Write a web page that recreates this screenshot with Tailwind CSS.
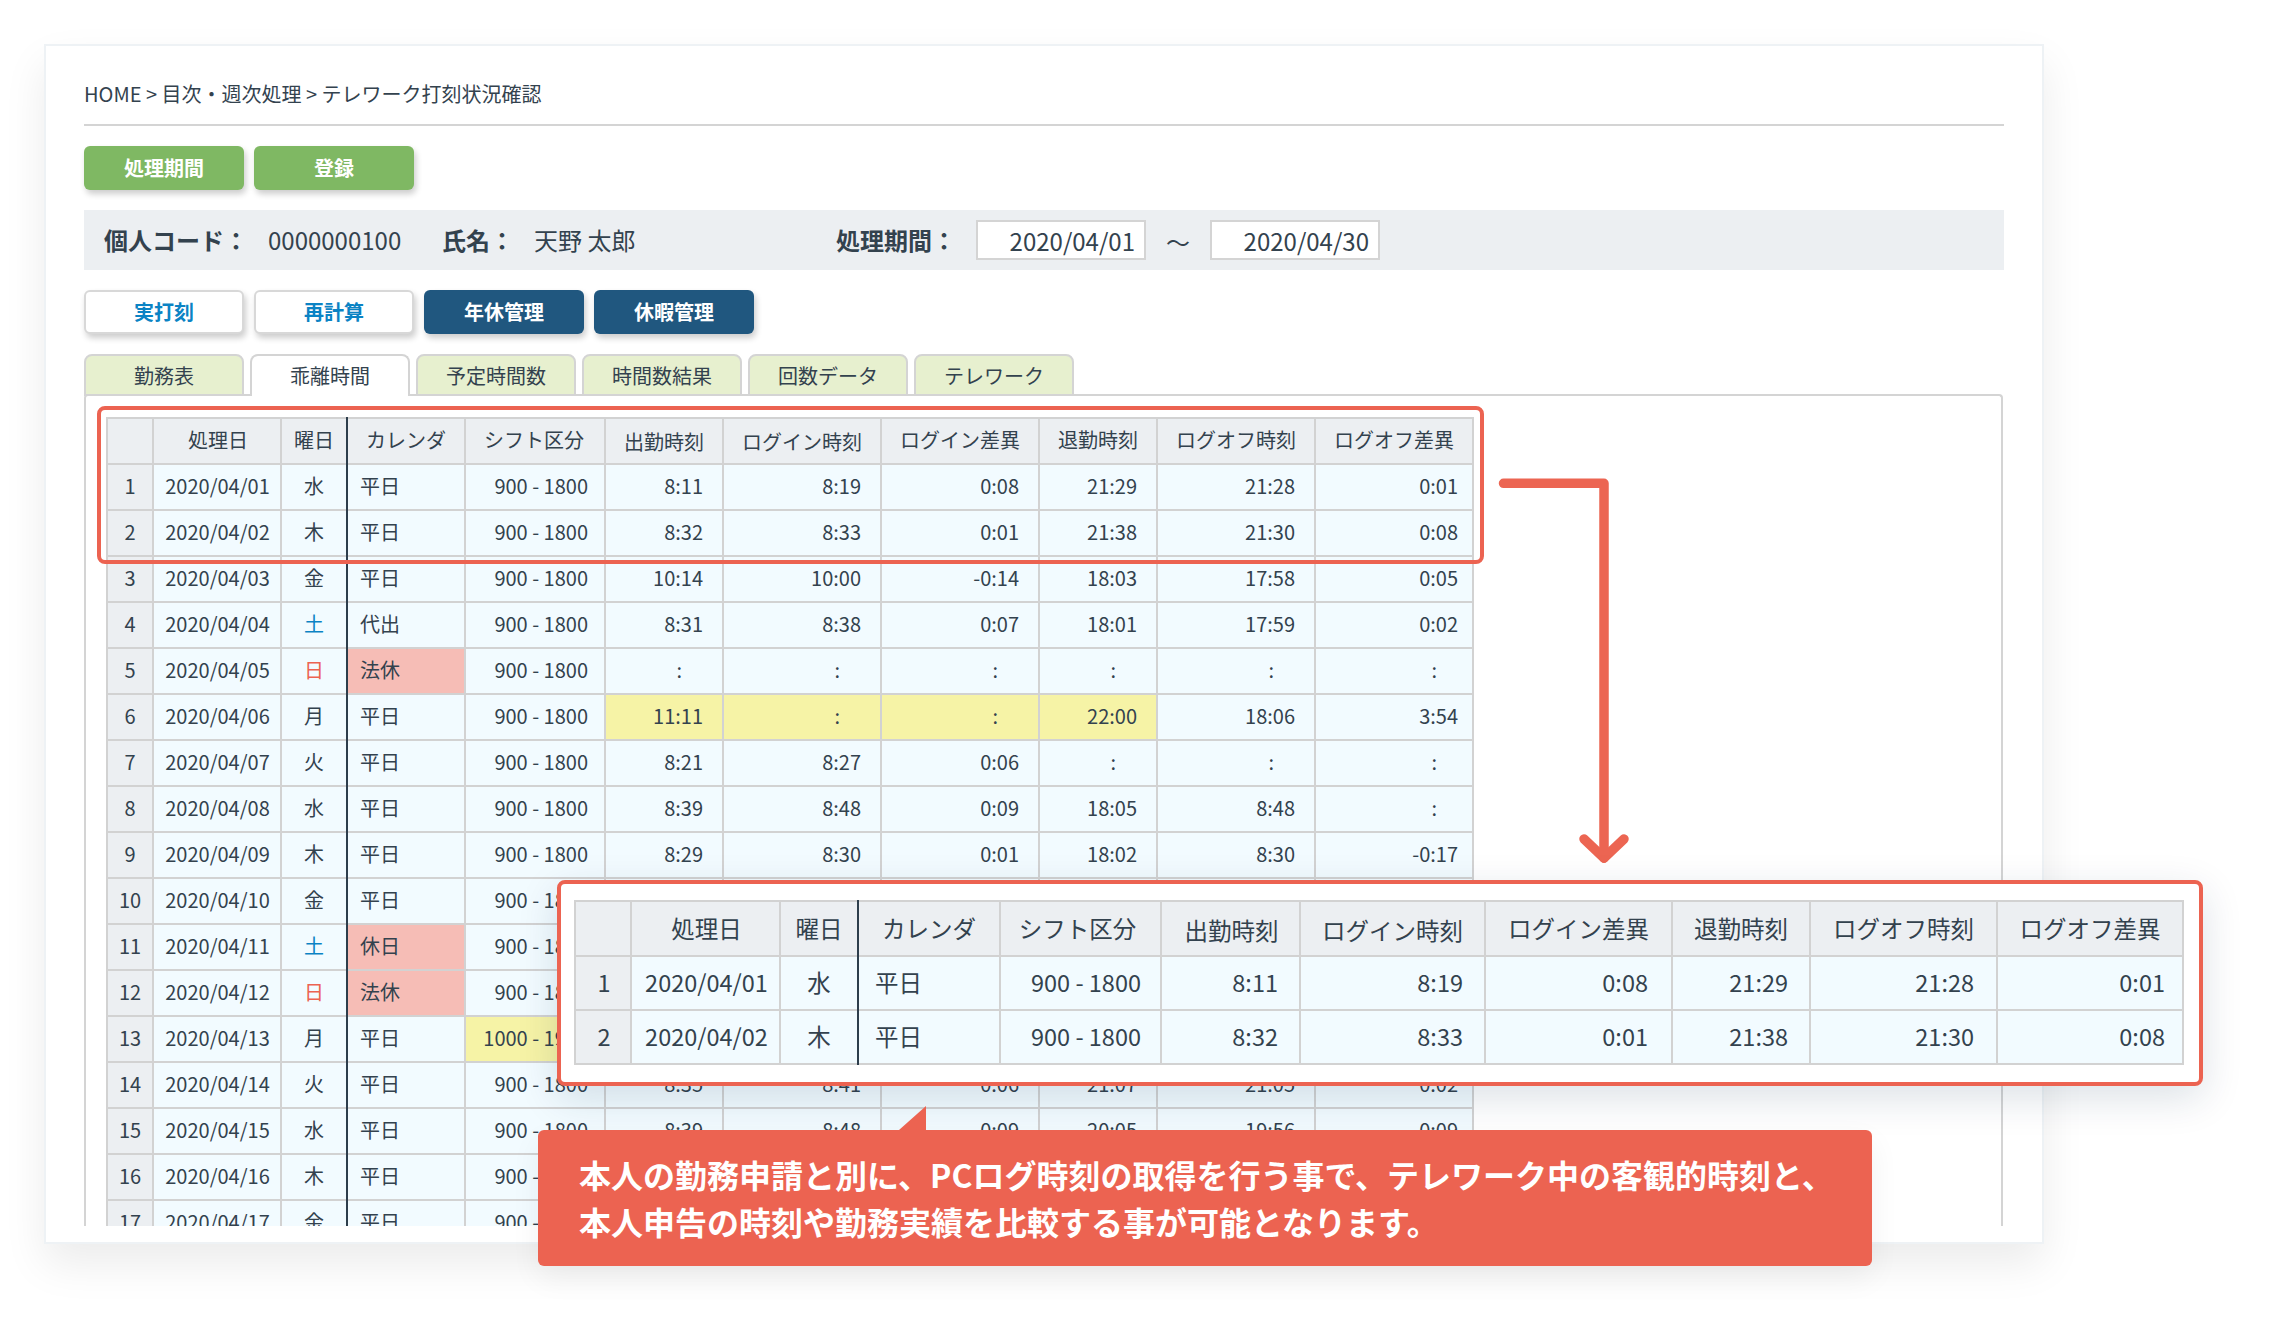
<!DOCTYPE html>
<html lang="ja">
<head>
  <meta charset="UTF-8">
  <title>テレワーク打刻状況確認</title>
  <script src="https://cdn.jsdelivr.net/npm/@tailwindcss/browser@4"></script>
</head>
<body class="relative w-[2280px] h-[1322px] overflow-hidden bg-white text-[#33424e] font-['Noto_Sans_CJK_JP','Noto_Sans',sans-serif]">

  <!-- screen card -->
  <div class="ml-[44px] mt-[44px] w-[2000px] h-[1200px] pl-[38px] pt-[32px] bg-white border-2 border-[#eef2f5] shadow-[0_20px_40px_rgba(0,0,0,0.08)]">
    <div class="w-[1920px]">
      <div class="h-[48px] leading-[32px] text-[20px] border-b-2 border-[#d4d4d4]">HOME &gt; 目次・週次処理 &gt; テレワーク打刻状況確認</div>

      <div class="flex gap-[10px] mt-[20px]">
        <button class="w-[160px] h-[44px] rounded-[6px] bg-[#7fb863] text-white text-[20px] font-bold shadow-[2px_4px_6px_rgba(0,0,0,0.2)]">処理期間</button>
        <button class="w-[160px] h-[44px] rounded-[6px] bg-[#7fb863] text-white text-[20px] font-bold shadow-[2px_4px_6px_rgba(0,0,0,0.2)]">登録</button>
      </div>

      <div class="flex items-center h-[60px] mt-[20px] pl-[20px] bg-[#eceff2] text-[24px]">
        <div class="w-[164px] font-bold">個人コード：</div>
        <div class="w-[174px]">0000000100</div>
        <div class="w-[92px] font-bold">氏名：</div>
        <div class="w-[302px]">天野 太郎</div>
        <div class="w-[140px] font-bold">処理期間：</div>
        <input readonly value="2020/04/01" class="w-[170px] h-[40px] pr-[9px] text-right bg-white border-2 border-[#d4d4d4]">
        <div class="w-[64px] pt-[4px] text-center">～</div>
        <input readonly value="2020/04/30" class="w-[170px] h-[40px] pr-[9px] text-right bg-white border-2 border-[#d4d4d4]">
      </div>

      <div class="flex gap-[10px] mt-[20px] text-[20px] font-bold">
        <button class="w-[160px] h-[44px] rounded-[6px] bg-white border-2 border-[#d8d8d8] text-[#0b83c4] shadow-[2px_4px_6px_rgba(0,0,0,0.2)]">実打刻</button>
        <button class="w-[160px] h-[44px] rounded-[6px] bg-white border-2 border-[#d8d8d8] text-[#0b83c4] shadow-[2px_4px_6px_rgba(0,0,0,0.2)]">再計算</button>
        <button class="w-[160px] h-[44px] rounded-[6px] bg-[#20577f] text-white shadow-[2px_4px_6px_rgba(0,0,0,0.2)]">年休管理</button>
        <button class="w-[160px] h-[44px] rounded-[6px] bg-[#20577f] text-white shadow-[2px_4px_6px_rgba(0,0,0,0.2)]">休暇管理</button>
      </div>

      <div class="relative z-10 flex gap-[6px] mt-[20px] -mb-[2px] text-[20px]">
        <div class="w-[160px] h-[42px] leading-[40px] text-center rounded-t-[8px] border-2 border-[#d4d4d4] bg-[#e7f0cf]">勤務表</div>
        <div class="w-[160px] h-[42px] leading-[40px] text-center rounded-t-[8px] border-2 border-b-0 border-[#d4d4d4] bg-white">乖離時間</div>
        <div class="w-[160px] h-[42px] leading-[40px] text-center rounded-t-[8px] border-2 border-[#d4d4d4] bg-[#e7f0cf]">予定時間数</div>
        <div class="w-[160px] h-[42px] leading-[40px] text-center rounded-t-[8px] border-2 border-[#d4d4d4] bg-[#e7f0cf]">時間数結果</div>
        <div class="w-[160px] h-[42px] leading-[40px] text-center rounded-t-[8px] border-2 border-[#d4d4d4] bg-[#e7f0cf]">回数データ</div>
        <div class="w-[160px] h-[42px] leading-[40px] text-center rounded-t-[8px] border-2 border-[#d4d4d4] bg-[#e7f0cf]">テレワーク</div>
      </div>

      <!-- scrolling table area -->
      <div class="w-[1919px] h-[832px] pl-[20px] pt-[21px] overflow-hidden border-2 border-b-0 border-[#d4d4d4] rounded-t-[4px]">
        <div class="relative w-[1368px]">
          <div class="absolute left-[240px] top-0 w-[2px] h-[900px] bg-[#2d3e4c] z-10"></div>
          <table class="w-[1368px] table-fixed border-collapse text-[20px] leading-[26px] [&_td]:border-2 [&_td]:border-[#d2d2d2] [&_td]:h-[46px] [&_td]:p-0 [&_td]:pb-[2px]">
            <colgroup>
              <col class="w-[46px]"><col class="w-[128px]"><col class="w-[66px]"><col class="w-[118px]"><col class="w-[140px]"><col class="w-[118px]"><col class="w-[158px]"><col class="w-[158px]"><col class="w-[118px]"><col class="w-[158px]"><col class="w-[158px]">
            </colgroup>
            <thead class="bg-[#eceff2] text-center">
              <tr><td></td><td><span class="relative left-[1px]">処理日</span></td><td>曜日</td><td>カレンダ</td><td><span class="relative -left-[1px]">シフト区分</span></td><td><span class="relative top-[2px]">出勤時刻</span></td><td><span class="relative top-[2px]">ログイン時刻</span></td><td>ログイン差異</td><td>退勤時刻</td><td>ログオフ時刻</td><td>ログオフ差異</td></tr>
            </thead>
            <tbody class="bg-[#f2fbff] [&_td:nth-child(1)]:bg-[#eceff2] [&_td:nth-child(2)]:pl-[1px] [&_td:nth-child(-n+3)]:text-center [&_td:nth-child(4)]:pl-[12px] [&_td:nth-child(n+5)]:text-right [&_td:nth-child(5)]:pr-[16px] [&_td:nth-child(n+6)]:pr-[19px] [&_tr_td:nth-child(11)]:pr-[14px]">
              <tr><td>1</td><td>2020/04/01</td><td>水</td><td>平日</td><td>900 - 1800</td><td>8:11</td><td>8:19</td><td>0:08</td><td>21:29</td><td>21:28</td><td>0:01</td></tr>
              <tr><td>2</td><td>2020/04/02</td><td>木</td><td>平日</td><td>900 - 1800</td><td>8:32</td><td>8:33</td><td>0:01</td><td>21:38</td><td>21:30</td><td>0:08</td></tr>
              <tr><td>3</td><td>2020/04/03</td><td>金</td><td>平日</td><td>900 - 1800</td><td>10:14</td><td>10:00</td><td>-0:14</td><td>18:03</td><td>17:58</td><td>0:05</td></tr>
              <tr><td>4</td><td>2020/04/04</td><td class="text-[#0b83c4]">土</td><td>代出</td><td>900 - 1800</td><td>8:31</td><td>8:38</td><td>0:07</td><td>18:01</td><td>17:59</td><td>0:02</td></tr>
              <tr><td>5</td><td>2020/04/05</td><td class="text-[#ec6351]">日</td><td class="bg-[#f6bdb6]">法休</td><td>900 - 1800</td><td><span class="mr-[21px]">:</span></td><td><span class="mr-[21px]">:</span></td><td><span class="mr-[21px]">:</span></td><td><span class="mr-[21px]">:</span></td><td><span class="mr-[21px]">:</span></td><td><span class="mr-[21px]">:</span></td></tr>
              <tr><td>6</td><td>2020/04/06</td><td>月</td><td>平日</td><td>900 - 1800</td><td class="bg-[#f6f3a6]">11:11</td><td class="bg-[#f6f3a6]"><span class="mr-[21px]">:</span></td><td class="bg-[#f6f3a6]"><span class="mr-[21px]">:</span></td><td class="bg-[#f6f3a6]">22:00</td><td>18:06</td><td>3:54</td></tr>
              <tr><td>7</td><td>2020/04/07</td><td>火</td><td>平日</td><td>900 - 1800</td><td>8:21</td><td>8:27</td><td>0:06</td><td><span class="mr-[21px]">:</span></td><td><span class="mr-[21px]">:</span></td><td><span class="mr-[21px]">:</span></td></tr>
              <tr><td>8</td><td>2020/04/08</td><td>水</td><td>平日</td><td>900 - 1800</td><td>8:39</td><td>8:48</td><td>0:09</td><td>18:05</td><td>8:48</td><td><span class="mr-[21px]">:</span></td></tr>
              <tr><td>9</td><td>2020/04/09</td><td>木</td><td>平日</td><td>900 - 1800</td><td>8:29</td><td>8:30</td><td>0:01</td><td>18:02</td><td>8:30</td><td>-0:17</td></tr>
              <tr><td>10</td><td>2020/04/10</td><td>金</td><td>平日</td><td>900 - 1800</td><td></td><td></td><td></td><td></td><td></td><td></td></tr>
              <tr><td>11</td><td>2020/04/11</td><td class="text-[#0b83c4]">土</td><td class="bg-[#f6bdb6]">休日</td><td>900 - 1800</td><td></td><td></td><td></td><td></td><td></td><td></td></tr>
              <tr><td>12</td><td>2020/04/12</td><td class="text-[#ec6351]">日</td><td class="bg-[#f6bdb6]">法休</td><td>900 - 1800</td><td></td><td></td><td></td><td></td><td></td><td></td></tr>
              <tr><td>13</td><td>2020/04/13</td><td>月</td><td>平日</td><td class="bg-[#f6f3a6]">1000 - 1900</td><td></td><td></td><td></td><td></td><td></td><td></td></tr>
              <tr><td>14</td><td>2020/04/14</td><td>火</td><td>平日</td><td>900 - 1800</td><td>8:35</td><td>8:41</td><td>0:06</td><td>21:07</td><td>21:05</td><td>0:02</td></tr>
              <tr><td>15</td><td>2020/04/15</td><td>水</td><td>平日</td><td>900 - 1800</td><td>8:39</td><td>8:48</td><td>0:09</td><td>20:05</td><td>19:56</td><td>0:09</td></tr>
              <tr><td>16</td><td>2020/04/16</td><td>木</td><td>平日</td><td>900 - 1800</td><td></td><td></td><td></td><td></td><td></td><td></td></tr>
              <tr><td>17</td><td>2020/04/17</td><td>金</td><td>平日</td><td>900 - 1800</td><td></td><td></td><td></td><td></td><td></td><td></td></tr>
            </tbody>
          </table>
        </div>
      </div>
    </div>
  </div>

  <!-- highlight round the first rows -->
  <div class="absolute left-[97px] top-[406px] w-[1387px] h-[158px] border-4 border-[#ec6351] rounded-[8px] z-20"></div>

  <!-- arrow -->
  <svg class="absolute left-[1490px] top-[470px] z-20" width="150" height="400" viewBox="0 0 150 400" fill="none" stroke="#ec6552" stroke-width="9.5" stroke-linecap="round" stroke-linejoin="round">
    <path d="M13.5 13.3H114V388"/>
    <path d="M94 369L114 388L134 369"/>
  </svg>

  <!-- enlarged rows -->
  <div class="absolute left-[557px] top-[880px] w-[1646px] h-[206px] pl-[13px] pt-[16px] bg-white border-4 border-[#ec6351] rounded-[8px] z-30 shadow-[0_12px_40px_rgba(0,40,80,0.14)]">
    <div class="relative w-[1610px]">
      <div class="absolute left-[283px] top-0 w-[2px] h-[165px] bg-[#2d3e4c] z-10"></div>
      <table class="w-[1610px] table-fixed border-collapse text-[23.5px] leading-[30px] [&_td]:border-2 [&_td]:border-[#d2d2d2] [&_td]:p-0 [&_td]:pb-[2px]">
        <colgroup>
          <col class="w-[56px]"><col class="w-[149px]"><col class="w-[78px]"><col class="w-[142px]"><col class="w-[161px]"><col class="w-[139px]"><col class="w-[185px]"><col class="w-[187px]"><col class="w-[138px]"><col class="w-[187px]"><col class="w-[186px]">
        </colgroup>
        <thead class="bg-[#eceff2] text-center">
          <tr class="[&_td]:h-[55px]"><td></td><td><span class="relative left-[1px]">処理日</span></td><td>曜日</td><td>カレンダ</td><td><span class="relative -left-[3px]">シフト区分</span></td><td><span class="relative left-[1px] top-[2px]">出勤時刻</span></td><td><span class="relative top-[2px]">ログイン時刻</span></td><td>ログイン差異</td><td>退勤時刻</td><td>ログオフ時刻</td><td>ログオフ差異</td></tr>
        </thead>
        <tbody class="bg-[#f2fbff] [&_td]:h-[54px] [&_td:nth-child(1)]:bg-[#eceff2] [&_td:nth-child(1)]:pl-[2px] [&_td:nth-child(2)]:pl-[2px] [&_td:nth-child(-n+3)]:text-center [&_td:nth-child(4)]:pl-[16px] [&_td:nth-child(n+5)]:text-right [&_td:nth-child(5)]:pr-[19px] [&_td:nth-child(n+6)]:pr-[21px] [&_tr_td:nth-child(8)]:pr-[23px] [&_tr_td:nth-child(10)]:pr-[22px] [&_tr_td:nth-child(11)]:pr-[17px]">
          <tr><td>1</td><td>2020/04/01</td><td>水</td><td>平日</td><td>900 - 1800</td><td>8:11</td><td>8:19</td><td>0:08</td><td>21:29</td><td>21:28</td><td>0:01</td></tr>
          <tr><td>2</td><td>2020/04/02</td><td>木</td><td>平日</td><td>900 - 1800</td><td>8:32</td><td>8:33</td><td>0:01</td><td>21:38</td><td>21:30</td><td>0:08</td></tr>
        </tbody>
      </table>
    </div>
  </div>

  <!-- callout -->
  <div class="absolute left-[538px] top-[1130px] w-[1334px] h-[136px] pl-[41px] pt-[21px] bg-[#ec6351] rounded-[6px] z-40 text-white text-[32px] font-bold leading-[47px] shadow-[0_12px_30px_rgba(0,0,0,0.06)]">
    <svg class="absolute left-[361px] -top-[24px]" width="27" height="24" viewBox="0 0 27 24"><polygon points="0,24 27,0 27,24" fill="#ec6351"/></svg>
    <p>本人の勤務申請と別に、PCログ時刻の取得を行う事で、テレワーク中の客観的時刻と、</p>
    <p>本人申告の時刻や勤務実績を比較する事が可能となります。</p>
  </div>
</body>
</html>
